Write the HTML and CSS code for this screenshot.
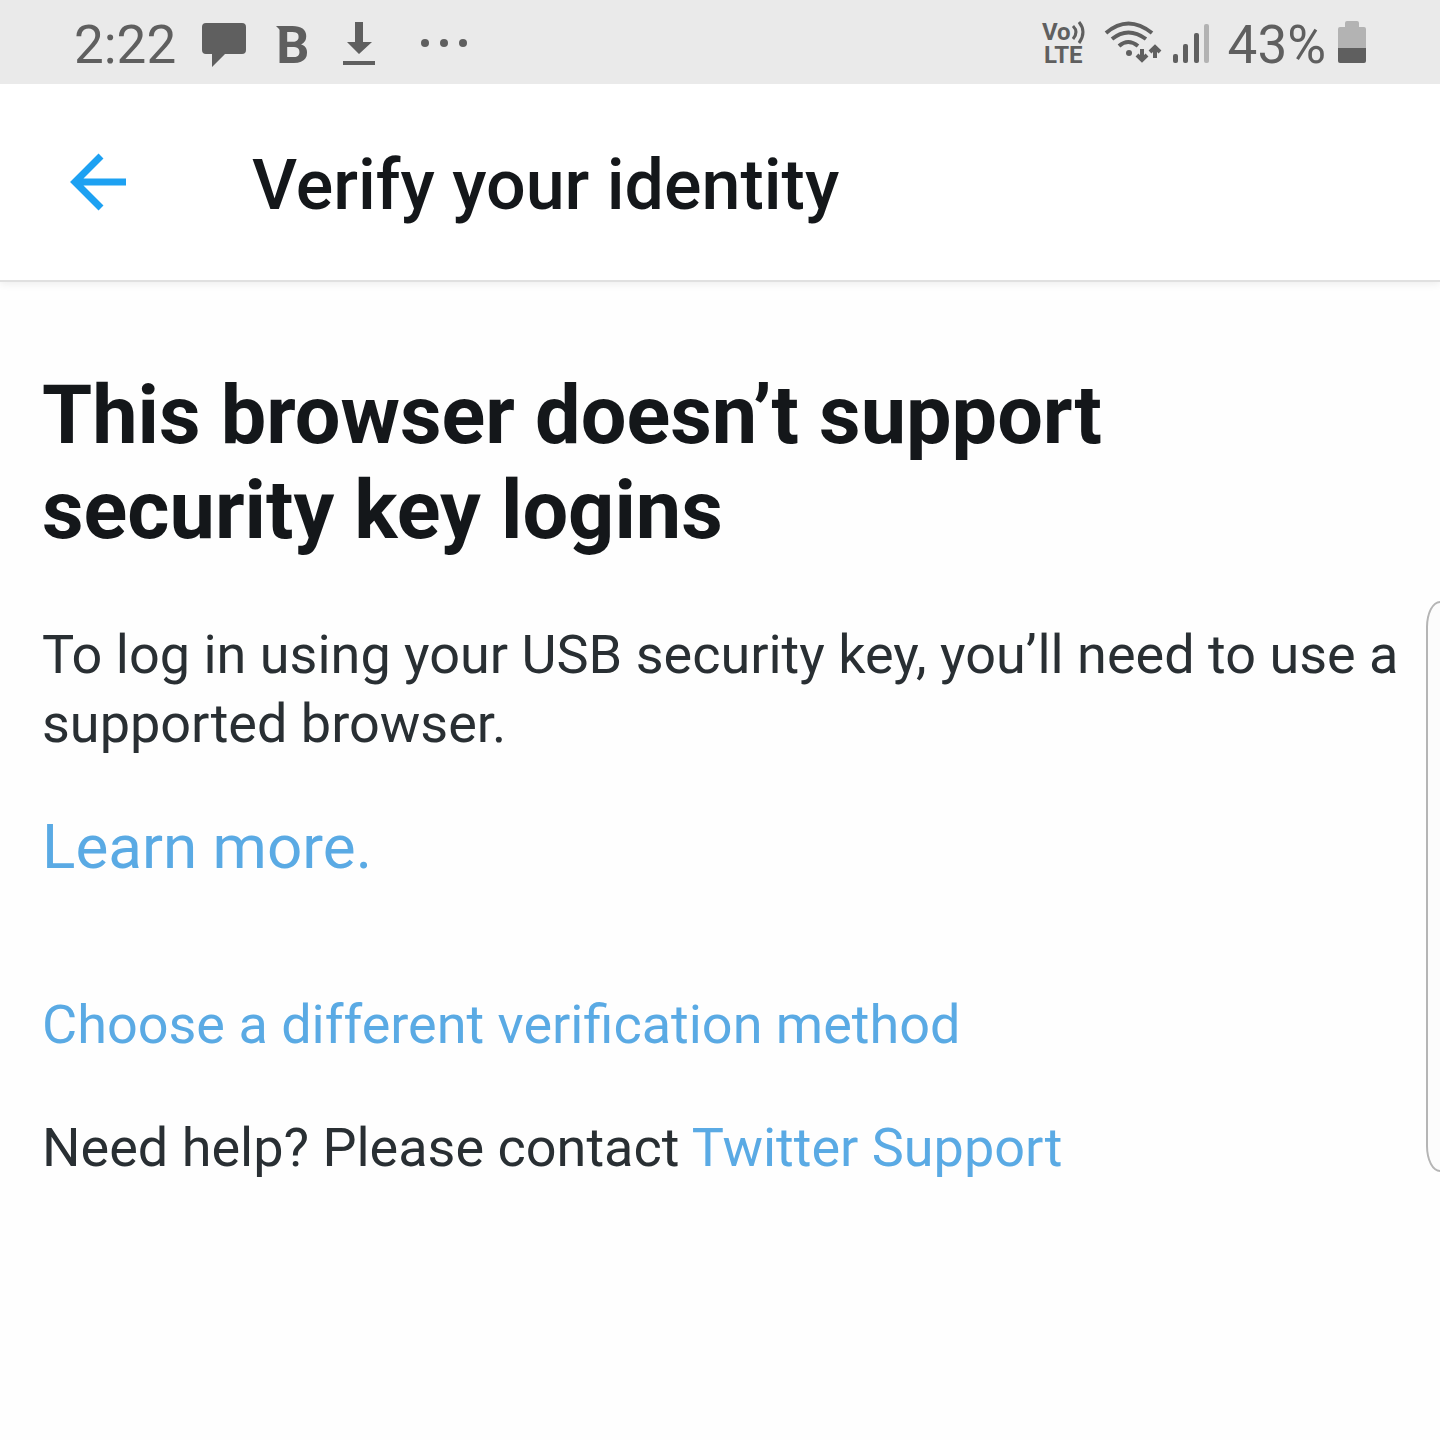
FILE: index.html
```html
<!DOCTYPE html>
<html lang="en">
<head>
    <meta charset="UTF-8">
    <meta name="viewport" content="width=device-width, initial-scale=1.0">
    <title>Verify your identity</title>
    <link rel="stylesheet" href="styles.css">
</head>
<body>
    <div class="status-bar">
        <div class="status-left">
            <span class="clock">2:22</span>
            <svg class="icon-message" width="44" height="44" viewBox="0 0 44 44" aria-hidden="true">
                <path d="M4 0h36q4 0 4 4v23q0 4-4 4H23L10 44V31H4q-4 0-4-4V4q0-4 4-4z"/>
            </svg>
            <span class="icon-b">B</span>
            <svg class="icon-download" width="32" height="44" viewBox="0 1 32 44" aria-hidden="true">
                <path d="M12 0h8v20h9L16 32 4 20h8zM0 39h32v4H0z"/>
            </svg>
            <svg width="48" height="44" viewBox="0 1 48 44" aria-hidden="true">
                <circle cx="4" cy="21" r="4"/>
                <circle cx="23" cy="21" r="4"/>
                <circle cx="42" cy="21" r="4"/>
            </svg>
        </div>
        <div class="status-right">
            <div class="volte">
                <span class="volte-row">Vo<svg width="14" height="24" viewBox="0 0 14 24" aria-hidden="true">
                    <path class="stroke wave" d="M2 5q6 6 0 13M8 1q8 10 0 21"/>
                </svg></span>
                <span class="volte-row volte-lte">LTE</span>
            </div>
            <svg width="56" height="44" viewBox="0 3 56 44" aria-hidden="true">
                <path class="stroke" d="M1 13Q23-6 47 13M7 19q16-13 34 0M14 26q9-8 19 0"/>
                <circle cx="24" cy="33" r="3"/>
                <path class="stroke" d="M37 29v12M32 35l5 5 5-5M50 38V26M45 32l5-5 5 5"/>
            </svg>
            <svg class="icon-signal" width="37" height="44" viewBox="0 3 37 44" aria-hidden="true">
                <rect x="0" y="34" width="5" height="9" rx="2"/>
                <rect x="10" y="24" width="5" height="19" rx="2"/>
                <rect x="21" y="13" width="5" height="30" rx="2"/>
                <rect class="dim" x="31" y="4" width="5" height="39" rx="2"/>
            </svg>
            <span class="battery-level">43%</span>
            <svg width="28" height="44" viewBox="0 3 28 44" aria-hidden="true">
                <path class="dim" d="M9 1h10q2 0 2 2v4h5q2 0 2 2v20H0V9q0-2 2-2h5V3q0-2 2-2z"/>
                <path d="M0 28h28v13q0 2-2 2H2q-2 0-2-2z"/>
            </svg>
        </div>
    </div>

    <header class="header">
        <button type="button" class="back-btn" aria-label="Back">
            <svg width="58" height="58" viewBox="0 0 58 58" aria-hidden="true">
                <path d="M57 29H6M32 3L6 29l26 26"/>
            </svg>
        </button>
        <h1 class="header-title">Verify your identity</h1>
    </header>

    <main class="content">
        <h2>This browser doesn’t support<br>security key logins</h2>
        <p>To log in using your USB security key, you’ll need to use a supported browser.</p>
        <p class="learn-more"><a href="#">Learn more.</a></p>
        <p><a href="#">Choose a different verification method</a></p>
        <p class="help">Need help? Please contact <a href="#">Twitter Support</a></p>
    </main>

    <!-- Edge panel sliding in from the right -->
    <div class="edge-panel"></div>
</body>
</html>
```

FILE: styles.css
```css
* {
    margin: 0;
    padding: 0;
    box-sizing: border-box;
}

body {
    font-family: Roboto, "Liberation Sans", sans-serif;
    font-size: 54px;
    line-height: 69px;
    color: #292f33;
    background: #fefefe;
    min-height: 100vh;
    position: relative;
    overflow-x: hidden;
}

a {
    color: #5aaae4;
    text-decoration: none;
}

/* Status bar */
.status-bar {
    display: flex;
    justify-content: space-between;
    align-items: center;
    height: 84px;
    padding: 6px 74px 0;
    background: #eaeaea;
    color: #5f5f5f;
    position: relative;
    z-index: 1;
}

.status-left,
.status-right {
    display: flex;
    align-items: center;
}

.status-bar svg {
    fill: #5f5f5f;
    flex-shrink: 0;
    overflow: visible;
}

.status-bar .stroke {
    fill: none;
    stroke: #5f5f5f;
    stroke-width: 4;
}

.status-bar .wave {
    stroke-width: 3;
}

.status-bar .dim {
    fill: #b3b3b3;
}

.clock,
.battery-level {
    font-size: 53px;
}

.icon-message {
    margin: 0 30px 0 26px;
}

.icon-b {
    position: relative;
    font-size: 52px;
    font-weight: 700;
}

/* little serif on the top left of the B */
.icon-b::before {
    content: "";
    position: absolute;
    left: 0;
    top: 15px;
    border-top: 7px solid #5f5f5f;
    border-left: 7px solid transparent;
}

.icon-download {
    margin: 0 46px 0 34px;
}

.volte {
    display: flex;
    flex-direction: column;
    margin: 0 20px 2px 0;
    font-size: 24px;
    font-weight: 700;
    line-height: 23px;
}

.volte-row {
    display: flex;
    height: 23px;
}

.volte-lte {
    padding-left: 2px;
}

.icon-signal {
    margin: 0 18px 0 12px;
}

.battery-level {
    margin-right: 12px;
}

/* Header */
.header {
    display: flex;
    align-items: center;
    height: 198px;
    padding: 0 69px;
    background: #fff;
    border-bottom: 2px solid #e0e0e0;
    box-shadow: 0 2px 8px rgba(0, 0, 0, 0.07);
}

.back-btn {
    display: flex;
    margin-right: 125px;
    background: none;
    border: none;
    cursor: pointer;
}

.back-btn svg {
    fill: none;
    stroke: #1da1f2;
    stroke-width: 7;
}

.header-title {
    padding-top: 6px;
    font-size: 70px;
    font-weight: 500;
    line-height: 80px;
    color: #14171a;
}

/* Content */
.content {
    padding: 86px 32px 86px 42px;
}

.content h2 {
    margin-bottom: 62px;
    font-size: 81px;
    font-weight: 700;
    line-height: 95px;
    color: #14171a;
}

.content .learn-more {
    margin: 49px 0 103px;
    font-size: 62px;
    line-height: 80px;
}

.content .help {
    margin-top: 54px;
}

.edge-panel {
    position: absolute;
    top: 601px;
    right: -16px;
    width: 30px;
    height: 571px;
    background: #fcfcfc;
    border: 2px solid #b5b5b5;
    border-radius: 14px / 26px;
}
```
